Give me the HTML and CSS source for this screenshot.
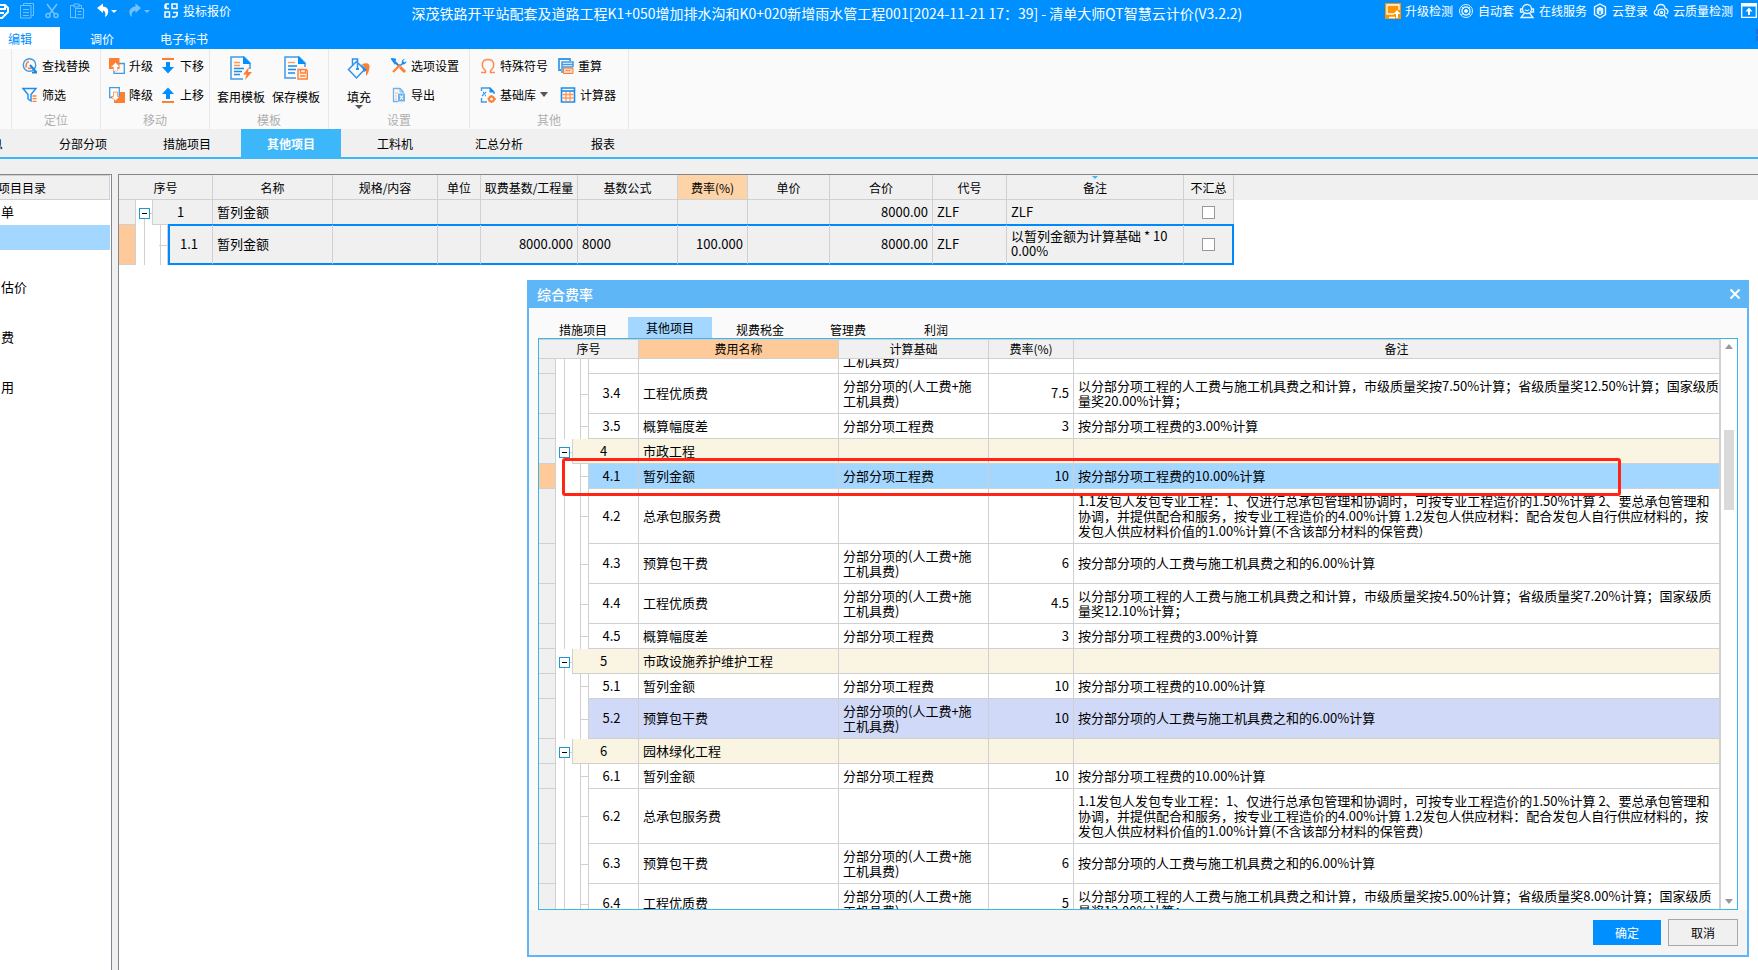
FILE: index.html
```html
<!DOCTYPE html>
<html lang="zh-CN">
<head>
<meta charset="utf-8">
<title>清单大师QT智慧云计价</title>
<link rel="stylesheet" href="styles.css">
</head>
<body>
<div class="app">
  <header class="top">
    <div class="titlebar">
      <div class="quick">
        <button class="q" aria-label="保存"><svg width="16" height="16" viewBox="0 0 16 16" fill="none" stroke="#fff" stroke-width="2"><path d="M1 2h11l3 3v4l-6 6H1z"/><path d="M5 2v4h7V3M5 10h6"/></svg></button>
        <button class="q dim" aria-label="复制"><svg width="14" height="16" viewBox="0 0 14 16" fill="none" stroke="#fff"><path d="M3.500 2.500V.5h10v12h-2"/><path d="M.5 2.500h10.500v12.500H.5zM3 6.500h6M3 9.500h6M3 12.500h6"/></svg></button>
        <button class="q dim" aria-label="剪切"><svg width="14" height="16" viewBox="0 0 14 16" fill="none" stroke="#fff" stroke-width="1.500"><path d="M2 1l7.500 10M12 1L4.500 11"/><circle cx="3" cy="12.500" r="2"/><circle cx="11" cy="12.500" r="2"/></svg></button>
        <button class="q dim" aria-label="粘贴"><svg width="14" height="16" viewBox="0 0 14 16" fill="none" stroke="#fff"><path d="M5 14.500H.5v-12h3.500M9 2.500h2.500V5M4 1h5v3H4z"/><path d="M5.500 5.500h8v9.500h-8zM7.500 8.500h4M7.500 11.500h4"/></svg></button>
        <button class="q" aria-label="撤销"><svg width="22" height="16" viewBox="0 0 22 16"><path d="M2 5l6-4.500v3c4 0 6 3 5 6.500-.5 2-1.500 3-3 4 1-4 0-6-2-6.500V10z" fill="#fff"/><path d="M16 7h6l-3 3z" fill="#fff"/></svg></button>
        <button class="q dim" aria-label="重做"><svg width="22" height="16" viewBox="0 0 22 16"><path d="M13 5L7.500.5v3C3 4 1 7 1.500 10c.3 2 1 3 2.500 4-1-4 1-6 3.500-6.500V10z" fill="#fff"/><path d="M16 7h6l-3 3z" fill="#fff"/></svg></button>
        <button class="q mode"><svg width="14" height="15" viewBox="0 0 14 15" fill="none" stroke="#fff" stroke-width="1.500"><path d="M5 1H2v4M1 5.500h4M8 1h5v4.500H8zM1 9h4.500v5H1zM13 9v3.500L11 14H8M9 9.500h5M1 1.500v4"/></svg><span>投标报价</span></button>
      </div>
      <h1 class="title">深茂铁路开平站配套及道路工程K1+050增加排水沟和K0+020新增雨水管工程001[2024-11-21 17：39] - 清单大师QT智慧云计价(V3.2.2)</h1>
      <nav class="services">
        <button class="s"><svg width="16" height="16" viewBox="0 0 16 16"><path fill="#ff9400" d="M0 0h16v16H0z"/><path d="M9 11H2V2h12v5M4 14.500h6" fill="none" stroke="#fff" stroke-width="1.300"/><path d="M12 7l3.500 4H13v4h-2v-4H8.500z" fill="#fff"/></svg>升级检测</button>
        <button class="s"><svg width="16" height="16" viewBox="0 0 16 16" fill="none" stroke="#d9efff"><circle cx="8" cy="8" r="6.500"/><circle cx="8" cy="8" r="4" stroke-width="1.500"/><circle cx="8" cy="8" r="1.500" fill="#fff"/><path d="M3 3l3 3M13 13l-3-3M12 4l-2 2M3 12l3-2"/></svg>自动套</button>
        <button class="s"><svg width="16" height="16" viewBox="0 0 16 16" fill="none" stroke="#e8f5ff" stroke-width="1.300"><circle cx="8" cy="6" r="4.500"/><path d="M3 6H1.500v3H4M13 6h1.500v3H12M5.500 10L2 14.500h12L10.500 10M6 6.500c1 1.500 3 1.500 4 0"/></svg>在线服务</button>
        <button class="s"><svg width="16" height="16" viewBox="0 0 16 16" fill="none" stroke="#e8f5ff" stroke-width="1.400"><path d="M8 1l5.500 3v7.500L8 15l-5.500-3.500V4z"/><path d="M8 4.500l2.500 1.500v4L8 11.500 5.500 10V6z" fill="#cfe9ff"/><path d="M8 8v3" stroke="#008fff"/></svg>云登录</button>
        <button class="s"><svg width="16" height="16" viewBox="0 0 16 16" fill="none" stroke="#e8f5ff" stroke-width="1.300"><path d="M5 12H4C1 12 0 8 3.500 6.500 3.500 0 11.500 0 12 5.500c3 .5 4 4 1.500 5.500"/><circle cx="8.500" cy="9.500" r="3.300"/><circle cx="8.500" cy="9.500" r="1"/><path d="M11 12l3 3"/></svg>云质量检测</button>
        <button class="s pin" aria-label="收起"><svg width="16" height="15" viewBox="0 0 16 15"><path d="M.7 1h14.600v13.300H.7z" fill="none" stroke="#fff" stroke-width="1.300"/><path d="M0 0h16v3.500H0zM8 4.500l3.500 4H9V12H7V8.500H4.500z" fill="#fff"/></svg></button>
      </nav>
    </div>
    <nav class="menu">
      <button class="m on">编辑</button><button class="m">调价</button><button class="m wide">电子标书</button>
      <svg class="grip" width="2" height="12" viewBox="0 0 2 12"><path fill="#2a6bd6" d="M0 0h2v5H0zM0 7h2v5H0z"/></svg>
    </nav>
  </header>

  <section class="ribbon">
    <div class="lead"></div>
    <div class="group g1">
      <div class="tools">
        <div class="col">
          <button class="t"><svg width="16" height="16" viewBox="0 0 16 16" fill="none"><circle cx="7.500" cy="7" r="6.200" stroke="#3e9be8" stroke-width="1.400"/><path d="M4.500 9.500c-1.500-3 .5-5.500 2.500-6M10 9.500c-1 1-3 1-4 .5" stroke="#ff7f32" stroke-width="1.500"/><path d="M8 7l6.500 7.500M10 14.500h5" stroke="#1b87dc" stroke-width="2"/></svg>查找替换</button>
          <button class="t"><svg width="16" height="16" viewBox="0 0 16 16" fill="none"><path d="M1 1.500h13L9 7.500V14l-3-2V7.500z" stroke="#1b8cee" stroke-width="1.400"/><path d="M10.500 9h4M10.500 11.700h4M10.500 14.300h4" stroke="#ff7f32" stroke-width="1.300"/></svg>筛选</button>
        </div>
      </div>
      <div class="name">定位</div>
    </div>
    <div class="group g2">
      <div class="tools">
        <div class="col">
          <button class="t"><svg width="16" height="16" viewBox="0 0 16 16"><path d="M10 5.500h5.300v9.800H5V11" fill="none" stroke="#3e9be8" stroke-width="1.300"/><path fill="#ff7f32" d="M0 0h10.500v11H0z"/><path d="M6.500 4.500L11 9H8.500v4h-4V9H2z" fill="#fff" stroke="#ff9a5c" stroke-width=".6"/></svg>升级</button>
          <button class="t"><svg width="16" height="16" viewBox="0 0 16 16"><path fill="#ff7f32" d="M5 5h11v11H5z"/><path d="M.7.7h9.600v10H.7z" fill="#fff" stroke="#3e9be8" stroke-width="1.300"/><path d="M6.500 14L11 9.500H8.500V5h-4v4.500H2z" fill="#fff" stroke="#ff7f32" stroke-width=".8"/></svg>降级</button>
        </div>
        <div class="col">
          <button class="t"><svg width="16" height="16" viewBox="0 0 16 16"><path fill="#ff7f32" d="M2 0h12v2H2z"/><path fill="#008fff" d="M6 4h4v5h4l-6 6.500L2 9h4z"/></svg>下移</button>
          <button class="t"><svg width="16" height="16" viewBox="0 0 16 16"><path fill="#ff7f32" d="M2 14h12v2H2z"/><path fill="#008fff" d="M6 12h4V7h4L8 .5 2 7h4z"/></svg>上移</button>
        </div>
      </div>
      <div class="name">移动</div>
    </div>
    <div class="group g3">
      <div class="tools">
        <button class="big"><svg width="24" height="24" viewBox="0 0 24 24" fill="none"><path d="M14 23H2V1h13l6 6v6" stroke="#3e9be8" stroke-width="1.500"/><path d="M14 0l8 8h-8z" fill="#008fff"/><path d="M5 6.500h6M5 9.500h6" stroke="#ff9a5c" stroke-width="1.300"/><path d="M5 12.500h10M5 15.500h8M5 18.500h6" stroke="#1b8cee" stroke-width="1.300"/><path d="M20 11l-6 7.500h3.500L16 24l7-8h-4z" fill="#ff7f32"/></svg>套用模板</button>
        <button class="big"><svg width="24" height="24" viewBox="0 0 24 24" fill="none"><path d="M12 22H1V1h14l6 6v4" stroke="#3e9be8" stroke-width="1.500"/><path d="M14 0l8 8h-8z" fill="#008fff"/><path d="M4 6.500h7" stroke="#ff9a5c" stroke-width="1.300"/><path d="M4 10h9M4 13.500h8M4 17h7" stroke="#1b8cee" stroke-width="1.300"/><path d="M14 13.500h8l1.300 1.500v8H14z" fill="#fff2ea" stroke="#ff7f32" stroke-width="1.400"/><path d="M16.500 13.500v3.500h5v-3.500M16 20h5.500" stroke="#ff7f32" stroke-width="1.300"/></svg>保存模板</button>
      </div>
      <div class="name">模板</div>
    </div>
    <div class="group g4">
      <div class="tools">
        <button class="big"><svg width="24" height="24" viewBox="0 0 24 24" fill="none"><path d="M9.500 5.500l8 8-8 8.500-8-8.500zM5.500 9.500V3h5v9" stroke="#2f93ea" stroke-width="1.500"/><path d="M9 13h3" stroke="#2f93ea" stroke-width="2"/><path d="M15 8c6-2 9 0 7 6-.5 2-1 4-3 6 0-4 0-7-1-8z" fill="#ff7f32"/><path d="M14 8l6 6-3 2z" fill="#1b8cee"/></svg>填充<svg class="drop" width="8" height="4" viewBox="0 0 8 4"><path fill="#555" d="M0 0h8L4 4z"/></svg></button>
        <div class="col">
          <button class="t"><svg width="16" height="16" viewBox="0 0 16 16" fill="none"><path d="M3 3l5 5M1 1l3 .5-.5 3z" stroke="#1b8cee" stroke-width="2"/><path d="M9 9l5 5" stroke="#ff7f32" stroke-width="3"/><path d="M2 14l7.500-7.500" stroke="#ff7f32" stroke-width="2.200"/><path d="M9 7l2-2c-1-2 1-4 3-4l-2 2 1.500 1.500L15.500 3c0 2-2 4-4 3.500L10 8z" fill="#1b8cee"/></svg>选项设置</button>
          <button class="t"><svg width="16" height="16" viewBox="0 0 16 16" fill="none"><path d="M7 14.500H2.500v-13H9l3 3V6" stroke="#6bb2f0" stroke-width="1.300"/><path d="M9 1v4h3.500" stroke="#6bb2f0"/><path d="M4 6h3M4 9h2M4 12h2" stroke="#ffb184"/><path d="M7 6.500h7v8H7z" fill="#6bb2f0"/><path d="M9 8.500l3 4M12 8.500l-3 4" stroke="#fff" stroke-width="1.200"/></svg>导出</button>
        </div>
      </div>
      <div class="name">设置</div>
    </div>
    <div class="group g5">
      <div class="tools">
        <div class="col">
          <button class="t"><svg width="16" height="16" viewBox="0 0 16 16" fill="none"><path d="M1 14.500h4.500v-2C0 8 2 1.500 8 1.500s8 6.500 2.500 11v2H15" stroke="#ff8a4a" stroke-width="1.500"/></svg>特殊符号</button>
          <button class="t"><svg width="16" height="16" viewBox="0 0 16 16" fill="none"><path d="M1.500 4V1H10l4 4v2M1.500 11v4H7" stroke="#3e9be8" stroke-width="1.400"/><path d="M9.500 0L15 5.500H9.500z" fill="#1b8cee"/><path d="M2 9l4-4M3 5.500h1M5 8.500h1" stroke="#3e9be8" stroke-width="1.400"/><circle cx="11.500" cy="12" r="2.500" stroke="#ff7f32" stroke-width="2"/><path d="M11.500 8v1M11.500 15v1M7.500 12h1M14.500 12h1.500" stroke="#ff7f32" stroke-width="1.500"/></svg>基础库<svg class="caret" width="8" height="5" viewBox="0 0 8 5"><path fill="#555" d="M0 0h8L4 5z"/></svg></button>
        </div>
        <div class="col">
          <button class="t"><svg width="16" height="16" viewBox="0 0 16 16" fill="none"><path d="M3 12H1V1h11v2" stroke="#3e9be8" stroke-width="1.800"/><path d="M4 15V4h11v5M4 6.500h11M4 9h11" stroke="#3e9be8" stroke-width="1.500"/><path d="M5.500 10H15v5.500H5.500z" fill="#ffd0b3" stroke="#ff7f32"/><path d="M8 12.500h5" stroke="#ff7f32" stroke-dasharray="1.500 1"/></svg>重算</button>
          <button class="t inset"><svg width="16" height="16" viewBox="0 0 16 16" fill="none"><path d="M1.500 1h13v14h-13z" stroke="#1b8cee" stroke-width="1.600"/><path d="M1.500 4h13" stroke="#1b8cee" stroke-width="1.600"/><path d="M2.500 7.500h11M2.500 11h11M6 5v9.500M10 5v9.500" stroke="#ff9a5c" stroke-width="1.400"/></svg>计算器</button>
        </div>
      </div>
      <div class="name">其他</div>
    </div>
  </section>

  <nav class="tabs">
    <button>项目信息</button><button>分部分项</button><button>措施项目</button><button class="on">其他项目</button><button>工料机</button><button>汇总分析</button><button>报表</button>
  </nav>

  <main class="work">
    <aside class="side">
      <h2>项目目录</h2>
      <ul>
        <li>单</li><li class="on"></li><li></li><li>估价</li><li></li><li>费</li><li></li><li>用</li>
      </ul>
    </aside>
    <section class="sheet">
      <table class="grid main-grid">
        <colgroup><col class="w17"><col class="w16"><col class="w16"><col class="w45"><col class="w120"><col class="w105"><col class="w43"><col class="w97"><col class="w100"><col class="w70"><col class="w82"><col class="w103"><col class="w74"><col class="w177"><col class="w50"></colgroup>
        <thead>
          <tr><th colspan="4">序号</th><th>名称</th><th>规格/内容</th><th>单位</th><th>取费基数/工程量</th><th>基数公式</th><th class="hot">费率(%)</th><th>单价</th><th>合价</th><th>代号</th><th class="sorted">备注</th><th>不汇总</th></tr>
        </thead>
        <tbody>
          <tr class="r1"><td class="ind"></td><td class="node"><button class="fold" aria-label="折叠"></button></td><td class="seq first" colspan="2">1</td><td>暂列金额</td><td></td><td></td><td></td><td></td><td></td><td></td><td class="num">8000.00</td><td>ZLF</td><td>ZLF</td><td class="chk"><input type="checkbox" aria-label="不汇总"></td></tr>
          <tr class="r2 picked"><td class="ind hot"></td><td class="branch" colspan="2"></td><td class="seq">1.1</td><td>暂列金额</td><td></td><td></td><td class="num">8000.000</td><td>8000</td><td class="num">100.000</td><td></td><td class="num">8000.00</td><td>ZLF</td><td class="wrap">以暂列金额为计算基础 * 10<br>0.00%</td><td class="chk"><input type="checkbox" aria-label="不汇总"></td></tr>
        </tbody>
      </table>
    </section>
  </main>

  <section class="dialog" role="dialog" aria-labelledby="dlg-title">
    <header class="dlg-head"><h2 id="dlg-title">综合费率</h2><button class="close" aria-label="关闭"><svg width="12" height="12" viewBox="0 0 12 12"><path d="M1.500 1.500l9 9M10.500 1.500l-9 9" stroke="#fff" stroke-width="2"/></svg></button></header>
    <nav class="dlg-tabs"><button>措施项目</button><button class="on">其他项目</button><button>规费税金</button><button>管理费</button><button>利润</button></nav>
    <div class="rates">
      <div class="rates-table">
        <table class="grid rate-grid head">
          <colgroup><col class="w17"><col class="w16"><col class="w17"><col class="w50"><col class="w200"><col class="w150"><col class="w85"><col></colgroup>
          <thead><tr><th colspan="4">序号</th><th class="hot">费用名称</th><th>计算基础</th><th>费率(%)</th><th>备注</th></tr></thead>
        </table>
        <div class="viewport">
        <table class="grid rate-grid body">
          <colgroup><col class="w17"><col class="w16"><col class="w17"><col class="w50"><col class="w200"><col class="w150"><col class="w85"><col></colgroup>
          <tbody>
            <tr class="r2"><td class="ind"></td><td class="branch" colspan="2"></td><td class="seq"></td><td></td><td>分部分项的(人工费+施<br>工机具费)</td><td class="num"></td><td></td></tr>
            <tr class="r2"><td class="ind"></td><td class="branch" colspan="2"></td><td class="seq">3.4</td><td>工程优质费</td><td>分部分项的(人工费+施<br>工机具费)</td><td class="num">7.5</td><td>以分部分项工程的人工费与施工机具费之和计算，市级质量奖按7.50%计算；省级质量奖12.50%计算；国家级质<br>量奖20.00%计算；</td></tr>
            <tr class="r1"><td class="ind"></td><td class="branch" colspan="2"></td><td class="seq">3.5</td><td>概算幅度差</td><td>分部分项工程费</td><td class="num">3</td><td>按分部分项工程费的3.00%计算</td></tr>
            <tr class="r1 parent"><td class="ind"></td><td class="node"><button class="fold" aria-label="折叠"></button></td><td class="seq first" colspan="2">4</td><td>市政工程</td><td></td><td></td><td></td></tr>
            <tr class="r1 current"><td class="ind hot"></td><td class="branch" colspan="2"></td><td class="seq">4.1</td><td>暂列金额</td><td>分部分项工程费</td><td class="num">10</td><td>按分部分项工程费的10.00%计算</td></tr>
            <tr class="r3"><td class="ind"></td><td class="branch" colspan="2"></td><td class="seq">4.2</td><td>总承包服务费</td><td></td><td></td><td>1.1发包人发包专业工程：1、仅进行总承包管理和协调时，可按专业工程造价的1.50%计算 2、要总承包管理和<br>协调，并提供配合和服务，按专业工程造价的4.00%计算 1.2发包人供应材料：配合发包人自行供应材料的，按<br>发包人供应材料价值的1.00%计算(不含该部分材料的保管费)</td></tr>
            <tr class="r2"><td class="ind"></td><td class="branch" colspan="2"></td><td class="seq">4.3</td><td>预算包干费</td><td>分部分项的(人工费+施<br>工机具费)</td><td class="num">6</td><td>按分部分项的人工费与施工机具费之和的6.00%计算</td></tr>
            <tr class="r2"><td class="ind"></td><td class="branch" colspan="2"></td><td class="seq">4.4</td><td>工程优质费</td><td>分部分项的(人工费+施<br>工机具费)</td><td class="num">4.5</td><td>以分部分项工程的人工费与施工机具费之和计算，市级质量奖按4.50%计算；省级质量奖7.20%计算；国家级质<br>量奖12.10%计算；</td></tr>
            <tr class="r1"><td class="ind"></td><td class="branch" colspan="2"></td><td class="seq">4.5</td><td>概算幅度差</td><td>分部分项工程费</td><td class="num">3</td><td>按分部分项工程费的3.00%计算</td></tr>
            <tr class="r1 parent"><td class="ind"></td><td class="node"><button class="fold" aria-label="折叠"></button></td><td class="seq first" colspan="2">5</td><td>市政设施养护维护工程</td><td></td><td></td><td></td></tr>
            <tr class="r1"><td class="ind"></td><td class="branch" colspan="2"></td><td class="seq">5.1</td><td>暂列金额</td><td>分部分项工程费</td><td class="num">10</td><td>按分部分项工程费的10.00%计算</td></tr>
            <tr class="r2 marked"><td class="ind"></td><td class="branch" colspan="2"></td><td class="seq">5.2</td><td>预算包干费</td><td>分部分项的(人工费+施<br>工机具费)</td><td class="num">10</td><td>按分部分项的人工费与施工机具费之和的6.00%计算</td></tr>
            <tr class="r1 parent"><td class="ind"></td><td class="node"><button class="fold" aria-label="折叠"></button></td><td class="seq first" colspan="2">6</td><td>园林绿化工程</td><td></td><td></td><td></td></tr>
            <tr class="r1"><td class="ind"></td><td class="branch" colspan="2"></td><td class="seq">6.1</td><td>暂列金额</td><td>分部分项工程费</td><td class="num">10</td><td>按分部分项工程费的10.00%计算</td></tr>
            <tr class="r3"><td class="ind"></td><td class="branch" colspan="2"></td><td class="seq">6.2</td><td>总承包服务费</td><td></td><td></td><td>1.1发包人发包专业工程：1、仅进行总承包管理和协调时，可按专业工程造价的1.50%计算 2、要总承包管理和<br>协调，并提供配合和服务，按专业工程造价的4.00%计算 1.2发包人供应材料：配合发包人自行供应材料的，按<br>发包人供应材料价值的1.00%计算(不含该部分材料的保管费)</td></tr>
            <tr class="r2"><td class="ind"></td><td class="branch" colspan="2"></td><td class="seq">6.3</td><td>预算包干费</td><td>分部分项的(人工费+施<br>工机具费)</td><td class="num">6</td><td>按分部分项的人工费与施工机具费之和的6.00%计算</td></tr>
            <tr class="r2"><td class="ind"></td><td class="branch" colspan="2"></td><td class="seq">6.4</td><td>工程优质费</td><td>分部分项的(人工费+施<br>工机具费)</td><td class="num">5</td><td>以分部分项工程的人工费与施工机具费之和计算，市级质量奖按5.00%计算；省级质量奖8.00%计算；国家级质<br>量奖12.00%计算；</td></tr>
          </tbody>
        </table>
        </div>
      </div>
      <div class="scroll"><svg width="8" height="5" viewBox="0 0 8 5"><path fill="#999" d="M0 5h8L4 0z"/></svg><div class="track"><div class="thumb"></div></div><svg width="8" height="5" viewBox="0 0 8 5"><path fill="#999" d="M0 0h8L4 5z"/></svg></div>
    </div>
    <footer class="dlg-foot"><button class="ok">确定</button><button class="cancel">取消</button></footer>
    <div class="callout"></div>
  </section>
</div>
</body>
</html>
```
FILE: styles.css
```css
* { box-sizing: border-box; }
body { margin: 0; color: #000; background: #f0f0f0; font: 12px/16px "Noto Sans CJK SC", "Liberation Sans", sans-serif; }
button { margin: 0; padding: 0; border: 0; background: none; color: inherit; font: inherit; white-space: nowrap; }
svg { display: block; flex: none; }
h1, h2, ul { margin: 0; padding: 0; font-weight: normal; list-style: none; }

.app { position: relative; display: flex; flex-direction: column; height: 100vh; overflow: hidden; }

.top { background: #008fff; color: #fff; }
.titlebar { display: flex; align-items: center; height: 27px; padding-bottom: 6px; }
.quick { display: flex; align-items: center; gap: 11px; margin-left: -7px; }
.dim { opacity: .45; }
.mode { display: flex; align-items: center; gap: 5px; margin-left: 3px; }
.title { flex: 1; padding: 4px 0 0 38px; text-align: center; font-size: 14px; line-height: 18px; white-space: nowrap; }
.services { display: flex; align-items: center; gap: 5px; padding-right: 1px; }
.s { display: flex; align-items: center; gap: 4px; }
.pin { margin-left: 3px; }
.menu { display: flex; height: 22px; }
.m { padding: 2px 0 0 30px; }
.m.on { padding: 2px 28px 0 8px; background: #fff; color: #008fff; }
.m.wide { padding-left: 46px; }
.grip { margin: 2px 0 0 auto; }

.ribbon { display: flex; height: 80px; background: #fafafa; }
.lead { width: 12px; border-right: 1px solid #e8e8e8; }
.group { padding-top: 2px; border-right: 1px solid #e8e8e8; }
.tools { display: flex; height: 58px; }
.name { color: #b0b0b0; text-align: center; line-height: 22px; }
.g1 { width: 89px; } .g1 .tools { padding-left: 10px; }
.g2 { width: 109px; } .g2 .tools { padding-left: 8px; gap: 7px; }
.g3 { width: 119px; } .g3 .tools { padding-left: 7px; gap: 7px; }
.g4 { width: 141px; } .g4 .tools { padding-left: 18px; gap: 20px; }
.g5 { width: 159px; } .g5 .tools { padding-left: 10px; gap: 10px; }
.col { display: flex; flex-direction: column; }
.t { display: flex; align-items: center; gap: 4px; height: 29px; }
.inset { padding-left: 2px; }
.big { display: flex; flex-direction: column; align-items: center; height: 58px; padding-top: 5px; }
.big svg:first-child { margin-bottom: 9px; }

.tabs { display: flex; gap: 4px; height: 30px; background: #f0f0f0; border-bottom: 2px solid #3cb8fa; overflow: hidden; }
.tabs button { flex: none; width: 100px; padding-top: 2px; }
.tabs button:first-child { margin-left: -71px; }
.tabs .on { background: #3cb8fa; color: #fff; font-weight: bold; }

.work { flex: 1; display: flex; gap: 6px; min-height: 0; padding-top: 15px; }
.side { width: 112px; border: 1px solid #82868f; border-width: 1px 1px 0 0; background: #fff; font-size: 13px; }
.side h2 { height: 25px; margin-right: 1px; padding-top: 1px; border: 1px solid #d0d0d0; border-left: 0; background: #f0f0f0; font-size: 12px; line-height: 21px; text-indent: -2px; }
.side li { height: 25px; margin-right: 1px; padding: 0 0 2px 1px; line-height: 23px; }
.side .on { background: #a3d7ff; }
.sheet { flex: 1; min-width: 0; border: 1px solid #82868f; border-width: 1px 0 0 1px; background: linear-gradient(#f0f0f0 25px, #fff 25px); overflow: hidden; }

.grid { table-layout: fixed; border-collapse: separate; border-spacing: 0; font-size: 13px; line-height: 15px; }
.grid th { position: relative; height: 25px; padding: 0; border: solid #d0d0d0; border-width: 0 1px 1px 0; background: #f0f0f0; font-size: 12px; font-weight: normal; white-space: nowrap; }
.grid td { padding: 0 4px 2px; border: solid #d0d0d0; border-width: 0 1px 1px 0; white-space: nowrap; }
.grid .num { text-align: right; }
.grid .seq { padding: 0 4px 2px 0; text-align: center; }
.grid .first { border-left: 1px solid #d0d0d0; }
.grid .ind { padding: 0; background: #f0f0f0; }
.grid .hot { background: #ffca99; }
.grid .chk { padding: 0; text-align: center; }
.r1 { height: 25px; } .r2 { height: 40px; } .r3 { height: 55px; }
.grid .node { padding: 8px 0 0 3px; border: 0; vertical-align: top; background: linear-gradient(#d0d0d0, #d0d0d0) 8px 100% / 1px 8px no-repeat, linear-gradient(#d0d0d0, #d0d0d0) 100% 13px / 3px 1px no-repeat, #fff; }
.grid .branch { padding: 0; border-bottom: 0; background: linear-gradient(#d0d0d0, #d0d0d0) 8px 0 / 1px 100% no-repeat, linear-gradient(#d0d0d0, #d0d0d0) 24px 0 / 1px 100% no-repeat, linear-gradient(#d0d0d0, #d0d0d0) 100% 50% / 8px 1px no-repeat, #fff; }
.fold { display: block; width: 11px; height: 11px; border: 1px solid #1c97d8; background: linear-gradient(#000, #000) center / 5px 1px no-repeat, #fff; }

.main-grid { width: 1115px; }
.main-grid td { background: #f0f0f0; }
.main-grid th.hot { background: #fdd3a8; }
.sorted::after { content: ""; position: absolute; top: 1px; left: 50%; margin-left: -3px; border: solid transparent; border-width: 3px 3px 0; border-top-color: #3cb8fa; }
.picked td:not(.ind):not(.branch) { border-bottom: 2px solid #0089ff; box-shadow: inset 0 1px #0089ff, 0 -1px #0089ff; }
.picked td.seq { border-left: 2px solid #0089ff; }
.picked td.chk { border-right: 2px solid #0089ff; }
.grid input { display: block; appearance: none; width: 13px; height: 13px; margin: 1px auto 0; border: 1px solid #999; background: #fff; }

.w16 { width: 16px; } .w17 { width: 17px; } .w43 { width: 43px; } .w45 { width: 45px; } .w50 { width: 50px; } .w70 { width: 70px; } .w74 { width: 74px; } .w82 { width: 82px; } .w85 { width: 85px; } .w97 { width: 97px; } .w100 { width: 100px; } .w103 { width: 103px; } .w105 { width: 105px; } .w120 { width: 120px; } .w150 { width: 150px; } .w177 { width: 177px; } .w200 { width: 200px; }

.dialog { position: absolute; top: 280px; right: 9px; bottom: 13px; left: 527px; display: flex; flex-direction: column; border: 2px solid #5fb6f7; border-top: 0; background: #fafafa; }
.dlg-head { display: flex; align-items: center; justify-content: space-between; height: 28px; padding: 0 6px 0 8px; background: #5fb6f7; color: #fff; }
.dlg-head h2 { font-size: 14px; font-weight: 500; }
.dlg-tabs { display: flex; align-items: flex-end; height: 30px; padding: 0 9px; }
.dlg-tabs button { width: 88px; height: 21px; padding-top: 4px; }
.dlg-tabs button:nth-child(1) { width: 90px; }
.dlg-tabs .on { width: 84px; margin-right: 4px; padding-top: 1px; background: #a3d7ff; }
.rates { flex: 1; display: flex; min-height: 0; margin: 0 9px; border: 1px solid #3ab6ea; background: #fff; }
.rates-table { flex: 1; display: flex; flex-direction: column; min-width: 0; border-right: 1px solid #d0d0d0; }
.rate-grid { width: 100%; }
.rate-grid th { height: 20px; padding-bottom: 1px; border-top: 1px solid #d0d0d0; }
.viewport { flex: 1; min-height: 0; overflow: hidden; }
.body { margin-top: -25px; }
.parent td { background: #faf4e2; }
.current td { background: #a3d7ff; }
.marked td { background: #d0d9f7; }
.scroll { display: flex; flex-direction: column; align-items: center; justify-content: space-between; width: 16px; padding: 5px 0; }
.track { flex: 1; width: 10px; padding-top: 81px; }
.thumb { height: 80px; background: #dadada; }
.dlg-foot { display: flex; align-items: center; justify-content: flex-end; gap: 7px; height: 45px; padding: 0 9px; background: #f4f4f4; }
.ok { width: 68px; height: 25px; background: #008fff; color: #fff; }
.cancel { width: 70px; height: 27px; border: 1px solid #a8a8a8; background: #f0f0f0; }
.callout { position: absolute; top: 178px; right: 126px; left: 33px; height: 38px; border: 3px solid #ff2414; border-radius: 3px; pointer-events: none; }
```
